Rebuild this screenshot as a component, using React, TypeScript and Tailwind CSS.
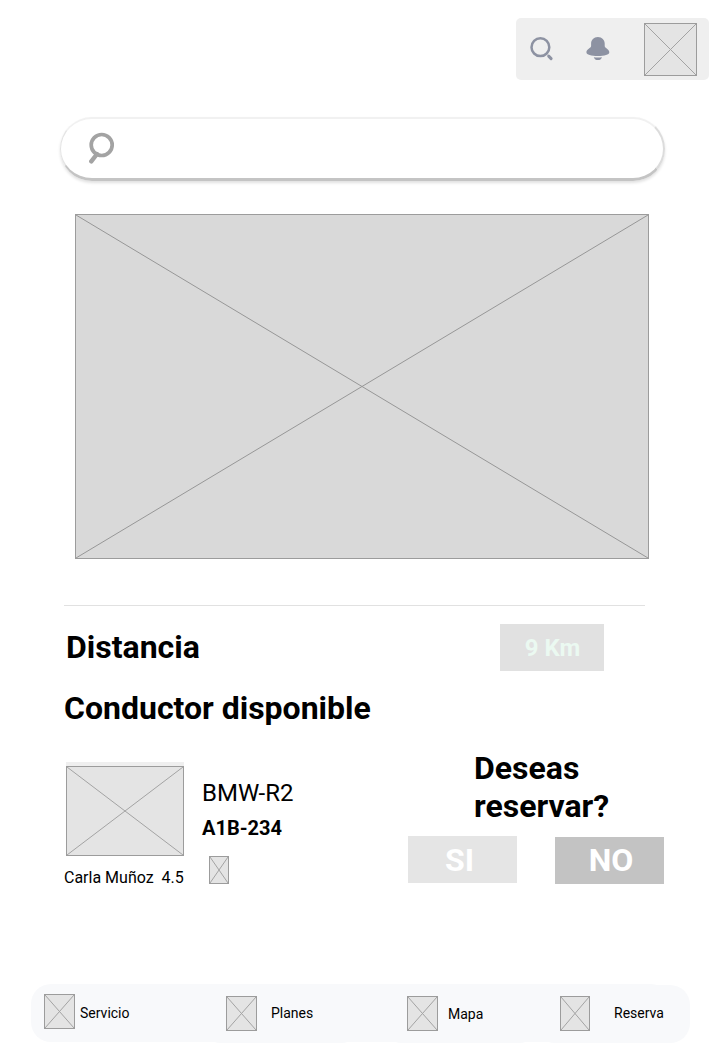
import React from "react";

function Placeholder({ className = "", fill = "#e4e4e4", line = "#a3a3a3" }: { className?: string; fill?: string; line?: string }) {
  return (
    <div className={`shrink-0 border border-[#9c9c9c] ${className}`}>
      <svg className="block h-full w-full" viewBox="0 0 100 100" preserveAspectRatio="none">
        <rect width="100" height="100" fill={fill} />
        <path d="M0 0 100 100M100 0 0 100" stroke={line} strokeWidth="1" vectorEffect="non-scaling-stroke" />
      </svg>
    </div>
  );
}

function Toolbar() {
  return (
    <header className="ml-[516px] flex h-[62px] w-[193px] items-start rounded-[5px] bg-[#efefef]">
      <svg className="mt-[18px] ml-[13px] shrink-0" width="26" height="26" viewBox="0 0 26 26" fill="none" stroke="#8d92a2">
        <circle cx="11.4" cy="11.2" r="8.9" strokeWidth="2.5" />
        <path d="M19.7 20.1 22.1 22.6" strokeWidth="3" strokeLinecap="round" />
      </svg>
      <svg className="mt-[18px] ml-[30px] shrink-0" width="26" height="26" viewBox="0 0 26 26" fill="#8d92a2">
        <path d="M12.9 1C8.8 1 6.1 4 6.1 7.5V10C6.1 12 1.4 13.2 1.4 16.3C1.4 19 6.4 20 12.9 20S24.3 19 24.3 16.3C24.3 13.2 19.7 12 19.7 10V7.5C19.7 4 17 1 12.9 1Z" />
        <path d="M8.8 21.2Q12.9 21.8 17 21.2C16.3 23.3 15 24.1 12.9 24.1S9.5 23.3 8.8 21.2Z" />
      </svg>
      <Placeholder className="mt-[5px] ml-[33px] h-[53px] w-[53px]" />
    </header>
  );
}

function SearchBar() {
  return (
    <div className="mt-[37px] ml-[60px] h-[64px] w-[605px] rounded-full border-t-2 border-r-2 border-b-[3px] border-l border-t-[#f1f1f1] border-r-[#dcdcdc] border-b-[#c4c4c4] border-l-[#e4e4e4] shadow-[0_2px_3px_rgba(0,0,0,0.12)]">
      <svg className="mt-[12px] ml-[26px] blur-[0.7px]" width="32" height="36" viewBox="0 0 32 36" fill="none" stroke="#a3a3a3">
        <circle cx="14.7" cy="14" r="10.5" strokeWidth="3.7" />
        <path d="M10 23 4.3 30.3" strokeWidth="4.4" strokeLinecap="round" />
      </svg>
    </div>
  );
}

function Driver() {
  return (
    <section className="mt-[22px] flex h-[141px] items-start">
      <div className="ml-[64px] w-[126px]">
        <div className="mt-[13px] ml-[2px] w-[118px] border-t-4 border-[#efefef]">
          <Placeholder className="h-[90px] w-[118px]" />
        </div>
        <p className="mt-[12px] text-base leading-[19px] whitespace-pre">Carla Muñoz  4.5</p>
      </div>
      <div className="mt-[30px] ml-[12px] w-[206px]">
        <p className="text-2xl leading-[28px]">BMW-R2</p>
        <p className="mt-[9px] text-xl leading-[24px] font-bold">A1B-234</p>
        <Placeholder className="mt-[16px] ml-[7px] h-[28px] w-[20px]" />
      </div>
      <div className="w-[256px]">
        <h2 className="ml-[66px] w-[150px] text-[32px] leading-[38px] font-bold">Deseas reservar?</h2>
        <div className="mt-[11px] flex items-start justify-between text-[32px] font-bold text-white">
          <button className="h-[47px] w-[109px] bg-[#e5e5e5] pt-px pr-[6px] leading-[46px]">SI</button>
          <button className="mt-px h-[47px] w-[109px] bg-[#c3c3c3] pb-px pl-[3px] leading-[46px]">NO</button>
        </div>
      </div>
    </section>
  );
}

function BottomNav() {
  return (
    <nav className="mt-[94px] ml-[31px] flex h-[58px] w-[640px] items-start rounded-[20px] bg-[#f8f9fb] text-sm leading-[16px]">
      <div className="flex h-[58px] w-[170px] shrink-0 items-start pl-[13px]">
        <Placeholder className="mt-[10px] h-[35px] w-[31px]" />
        <span className="mt-[21px] ml-[5px]">Servicio</span>
      </div>
      <div className="mt-px flex h-[58px] w-[160px] shrink-0 items-start rounded-[20px] bg-[#f8f9fb] pl-[25px]">
        <Placeholder className="mt-[11px] h-[35px] w-[31px]" />
        <span className="mt-[20px] ml-[14px]">Planes</span>
      </div>
      <div className="mt-px ml-[21px] flex h-[58px] w-[157px] shrink-0 items-start rounded-[20px] bg-[#f8f9fb] pl-[25px]">
        <Placeholder className="mt-[11px] h-[35px] w-[31px]" />
        <span className="mt-[21px] ml-[10px]">Mapa</span>
      </div>
      <div className="mt-px ml-[-4px] flex h-[58px] w-[155px] shrink-0 items-start rounded-[20px] bg-[#f8f9fb] pl-[25px]">
        <Placeholder className="mt-[11px] h-[35px] w-[30px]" />
        <span className="mt-[20px] ml-[24px]">Reserva</span>
      </div>
    </nav>
  );
}

export default function App() {
  return (
    <main className="flex h-[1063px] w-[721px] flex-col overflow-hidden bg-white pt-[18px] font-['Roboto',sans-serif] text-black">
      <Toolbar />
      <SearchBar />
      <Placeholder className="mt-[33px] ml-[75px] h-[345px] w-[574px]" fill="#d9d9d9" line="#979797" />
      <hr className="mt-[46px] ml-[64px] w-[581px] border-[#e1e1e1]" />
      <section className="mt-[18px] ml-[66px] flex h-[47px] w-[538px] items-start justify-between">
        <h2 className="mt-[4px] text-[32px] leading-[38px] font-bold">Distancia</h2>
        <span className="h-[47px] w-[104px] bg-[#e1e1e1] pl-px text-center text-2xl leading-[49px] font-bold text-[#ebf9f1]">9 Km</span>
      </section>
      <h2 className="mt-[18px] ml-[64px] text-[32px] leading-[38px] font-bold">Conductor disponible</h2>
      <Driver />
      <BottomNav />
    </main>
  );
}
